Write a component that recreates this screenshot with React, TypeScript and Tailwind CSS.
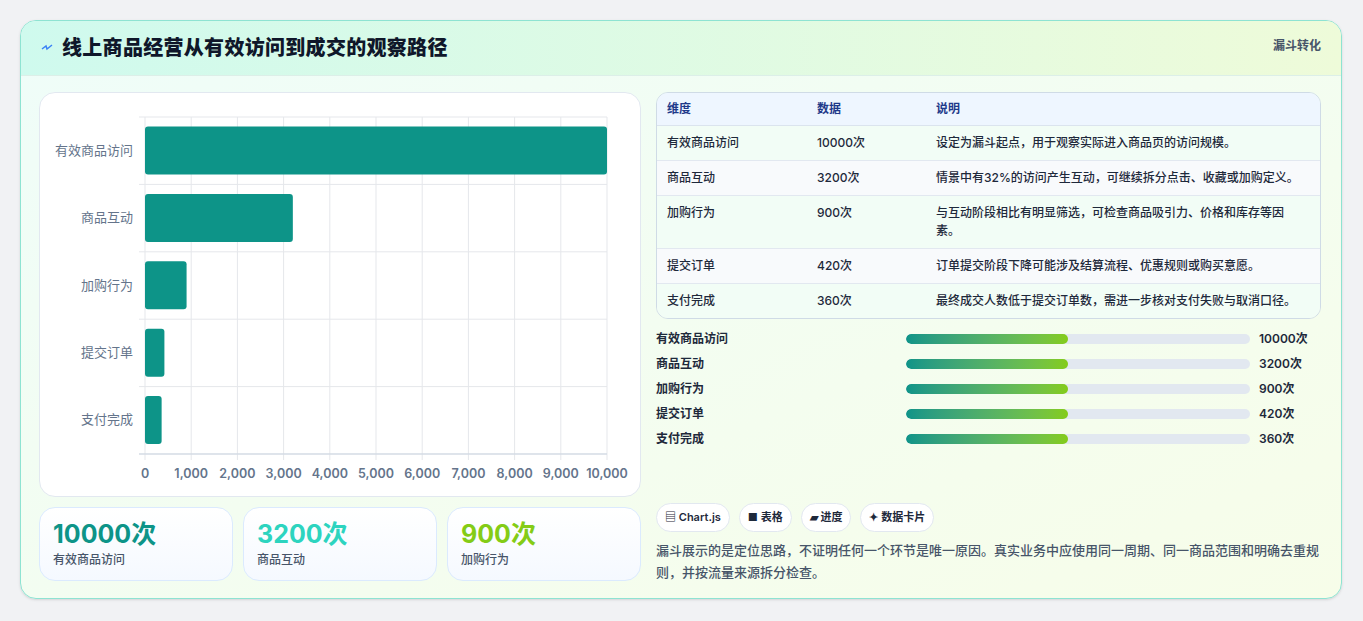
import React from 'react';

const rows = [
  { name: '有效商品访问', value: 10000, desc: '设定为漏斗起点，用于观察实际进入商品页的访问规模。' },
  { name: '商品互动', value: 3200, desc: '情景中有32%的访问产生互动，可继续拆分点击、收藏或加购定义。' },
  { name: '加购行为', value: 900, desc: '与互动阶段相比有明显筛选，可检查商品吸引力、价格和库存等因素。' },
  { name: '提交订单', value: 420, desc: '订单提交阶段下降可能涉及结算流程、优惠规则或购买意愿。' },
  { name: '支付完成', value: 360, desc: '最终成交人数低于提交订单数，需进一步核对支付失败与取消口径。' },
];

function Chart() {
  const x0 = 105, x1 = 567, y0 = 24, y1 = 361;
  const band = (y1 - y0) / 5;
  const ticks = [0, 1000, 2000, 3000, 4000, 5000, 6000, 7000, 8000, 9000, 10000];
  const sx = (v: number) => x0 + ((x1 - x0) * v) / 10000;
  return (
    <svg width="600" height="402" className="block">
      {ticks.map((t) => (
        <line key={t} x1={sx(t)} x2={sx(t)} y1={y0} y2={y1 + 6} stroke="#e5e7eb" />
      ))}
      {[0, 1, 2, 3, 4, 5].map((i) => (
        <line key={i} x1={x0 - 6} x2={x1} y1={y0 + band * i} y2={y0 + band * i} stroke="#e5e7eb" />
      ))}
      <line x1={x0 - 6} x2={x1} y1={y1} y2={y1} stroke="#cbd5e1" />
      {rows.map((r, i) => (
        <g key={r.name}>
          <rect x={x0} y={y0 + band * i + 9.5} width={sx(r.value) - x0} height={48} rx={3} fill="#0d9488" />
          <text x={x0 - 12} y={y0 + band * i + band / 2 + 4} textAnchor="end" fontSize="13" fill="#64748b">{r.name}</text>
        </g>
      ))}
      {ticks.map((t) => (
        <text key={t} x={sx(t)} y={y1 + 24} textAnchor="middle" fontSize="12.5" fontWeight="600" fill="#64748b">{t.toLocaleString('en-US')}</text>
      ))}
    </svg>
  );
}

export default function App() {
  return (
    <div className="min-h-[621px] bg-[#f1f2f4] pt-5 pl-5 pr-5" style={{ fontFamily: 'Inter, "Noto Sans CJK SC", sans-serif' }}>
      <div className="w-[1322px] h-[579px] rounded-2xl border border-[#8ee3d2] bg-gradient-to-br from-[#effdf9] to-[#f7fde9] overflow-hidden shadow-sm">
        <div className="h-[55px] flex items-center justify-between px-5 bg-gradient-to-r from-[#cffaee] to-[#eefbd9] border-b border-[#dcefe8]">
          <div className="flex items-center gap-[9px]">
            <svg width="12" height="10" viewBox="0 0 12 10"><path d="M1 6 L5 3 L6 6 L11 2" stroke="#3b82f6" strokeWidth="1.5" fill="none" /></svg>
            <h1 className="text-[20px] font-extrabold text-[#0f172a] tracking-[0.3px]">线上商品经营从有效访问到成交的观察路径</h1>
          </div>
          <span className="text-[12px] font-semibold text-[#475569] self-start mt-[16px]">漏斗转化</span>
        </div>
        <div className="flex gap-[15px] pl-[18px] pr-5 pt-4">
          <div className="w-[603px] flex flex-col gap-[10px]">
            <div className="h-[405px] rounded-2xl bg-white border border-[#e2e8f0]">
              <Chart />
            </div>
            <div className="grid grid-cols-3 gap-[10px]">
              {[
                ['10000次', '有效商品访问', 'text-[#0d9488]'],
                ['3200次', '商品互动', 'text-[#2dd4bf]'],
                ['900次', '加购行为', 'text-[#84cc16]'],
              ].map(([v, l, c]) => (
                <div key={l} className="h-[74px] rounded-2xl border border-[#dbeafe] bg-gradient-to-b from-white to-[#f5f9ff] px-[13px] pt-[10px]">
                  <div className={`text-[25px] font-bold leading-[32px] ${c}`}>{v}</div>
                  <div className="text-[12px] text-[#475569] font-medium mt-[1px]">{l}</div>
                </div>
              ))}
            </div>
          </div>
          <div className="w-[667px] flex flex-col">
            <div className="rounded-xl border border-[#cfdbe6] overflow-hidden text-[12px] text-[#1e293b] font-medium">
              <div className="flex h-[33px] items-center bg-[#eef6ff] text-[#1e3a8a] font-semibold border-b border-[#dbe4ee]">
                <div className="w-[160px] pl-[10px]">维度</div>
                <div className="w-[119px]">数据</div>
                <div>说明</div>
              </div>
              {rows.map((r, i) => (
                <div key={r.name} className={`flex py-[8px] ${i % 2 ? 'bg-[#f8fafc]' : 'bg-[#f2fdf6]'} ${i < 4 ? 'border-b border-[#e2e8f0]' : ''}`}>
                  <div className="w-[160px] pl-[10px] leading-[18px]">{r.name}</div>
                  <div className="w-[119px] leading-[18px]">{r.value}次</div>
                  <div className="w-[370px] leading-[18px]">{r.desc}</div>
                </div>
              ))}
            </div>
            <div className="mt-[11px] flex flex-col gap-[7px]">
              {rows.map((r) => (
                <div key={r.name} className="flex items-center h-[18px] text-[12px] font-semibold text-[#1e293b]">
                  <div className="w-[250px]">{r.name}</div>
                  <div className="w-[344px] h-[10px] rounded-full bg-[#e2e8f0] overflow-hidden">
                    <div className="h-full w-[47%] rounded-full bg-gradient-to-r from-[#0d9488] to-[#84cc16]" />
                  </div>
                  <div className="ml-[9px]">{r.value}次</div>
                </div>
              ))}
            </div>
            <div className="mt-[55px] flex gap-[9px] text-[11px] font-semibold text-[#1e293b]">
              {['▤ Chart.js', '■ 表格', '▰ 进度', '✦ 数据卡片'].map((t) => (
                <span key={t} className="h-[29px] px-[8px] flex items-center rounded-full bg-white border border-[#e2e8f0]">{t}</span>
              ))}
            </div>
            <p className="mt-[7px] text-[13px] leading-[22px] text-[#475569] font-medium">漏斗展示的是定位思路，不证明任何一个环节是唯一原因。真实业务中应使用同一周期、同一商品范围和明确去重规则，并按流量来源拆分检查。</p>
          </div>
        </div>
      </div>
    </div>
  );
}
